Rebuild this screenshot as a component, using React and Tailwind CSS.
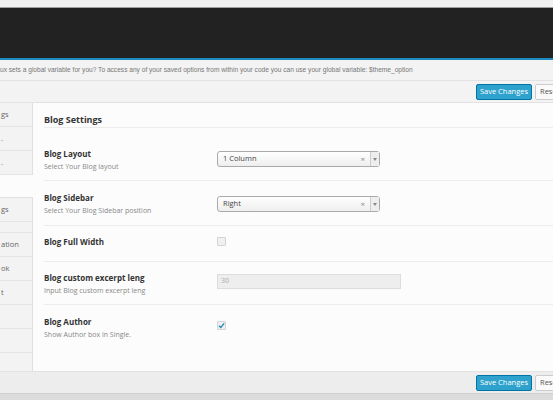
import React from "react";

const sidebarTop = [
  { label: "gs", h: 24 },
  { label: ".", h: 24 },
  { label: ".", h: 24 },
];
const sidebarBottom = [
  { label: "gs", h: 24 },
  { label: "", h: 11 },
  { label: "ation", h: 24 },
  { label: "ok", h: 24 },
  { label: "t", h: 24 },
  { label: "", h: 24 },
  { label: "", h: 24 },
];

function SideItem({ label, h }) {
  return (
    <div
      className="flex items-center whitespace-nowrap border-b border-[#e4e4e4] pl-[1px] text-[7.5px] text-[#666]"
      style={{ height: h }}
    >
      {label}
    </div>
  );
}

function Select({ value }) {
  return (
    <div className="flex h-[16px] w-[163px] items-center rounded-[3px] border border-[#aaaaaa] bg-gradient-to-b from-white to-[#eeeeee] text-[7.5px] text-[#444]">
      <span className="flex-1 pl-[5px]">{value}</span>
      <span className="pr-[5px] text-[8px] leading-none text-[#888]">×</span>
      <span className="flex h-full w-[9px] items-center justify-center border-l border-[#cccccc] bg-[#eeeeee]">
        <span className="block h-0 w-0 border-x-[2px] border-t-[3px] border-x-transparent border-t-[#888]" />
      </span>
    </div>
  );
}

function Row({ h, pt = 10, title, desc, children, ctlMt, last }) {
  return (
    <div
      className={`flex ${last ? "flex-1" : "border-b border-[#ececec]"}`}
      style={{ height: last ? undefined : h, paddingTop: pt }}
    >
      <div className="w-[173px] shrink-0">
        <div className="text-[8px] font-bold leading-[12px] text-[#333]">{title}</div>
        {desc && <div className="mt-[1px] text-[7px] leading-[12px] text-[#888]">{desc}</div>}
      </div>
      <div style={{ marginTop: ctlMt }}>{children}</div>
    </div>
  );
}

function Checkbox({ checked }) {
  return (
    <div className="flex h-[9px] w-[9px] items-center justify-center rounded-[1px] border border-[#d4d4d4] bg-[#f0f0f0]">
      {checked && (
        <svg width="7" height="7" viewBox="0 0 10 10">
          <path d="M1.5 5.2 L4 7.8 L8.8 2" fill="none" stroke="#1e8cbe" strokeWidth="2" />
        </svg>
      )}
    </div>
  );
}

function Buttons() {
  return (
    <div className="flex items-center justify-end gap-[3px]">
      <button className="h-[16px] w-[56px] shrink-0 rounded-[2px] border border-[#0074a2] bg-[#2ea2cc] text-[7.5px] text-white">
        Save Changes
      </button>
      <button className="h-[16px] w-[30px] shrink-0 rounded-[2px] border border-[#cccccc] bg-[#fafafa] pl-[4px] text-left text-[7.5px] text-[#555] -mr-[12px]">
        Reset
      </button>
    </div>
  );
}

export default function App() {
  return (
    <div
      className="flex h-[400px] w-[553px] flex-col overflow-hidden bg-[#f1f1f1]"
      style={{ fontFamily: '"Open Sans", "Liberation Sans", sans-serif' }}
    >
      <div className="h-[8px] shrink-0 border-b border-[#a0a0a0] bg-[#f1f1f1]" />
      <div className="h-[50px] shrink-0 bg-[#222222]" />
      <div className="h-[2px] shrink-0 bg-[#1e8cbe]" />
      <div
        className="flex h-[21px] shrink-0 items-center whitespace-nowrap border-b border-[#e2e2e2] bg-[#f3f3f3] text-[6.6px] text-[#777]"
        style={{ fontFamily: '"Liberation Sans", Arial, sans-serif' }}
      >
        ux sets a global variable for you? To access any of your saved options from within your code you can use your global variable: $theme_option
      </div>
      <div className="flex h-[22px] shrink-0 items-center justify-end overflow-visible border-b border-[#e2e2e2] bg-[#f3f3f3]">
        <Buttons />
      </div>
      <div className="flex min-h-0 flex-1">
        <div className="flex w-[33px] shrink-0 flex-col">
          <div className="border-r border-[#e0e0e0] bg-[#f3f3f3]">
            {sidebarTop.map((it, i) => (
              <SideItem key={i} {...it} />
            ))}
          </div>
          <div className="h-[22px] bg-[#fcfcfc]" />
          <div className="flex-1 border-r border-t border-[#e0e0e0] bg-[#f3f3f3]">
            {sidebarBottom.map((it, i) => (
              <SideItem key={i} {...it} />
            ))}
          </div>
        </div>
        <div className="flex flex-1 flex-col bg-[#fcfcfc] pl-[11px]">
          <div className="flex h-[25px] shrink-0 items-end border-b border-[#ececec] pb-[1px] text-[9px] font-bold text-[#333]">
            Blog Settings
          </div>
          <Row h={53} pt={20} title="Blog Layout" desc="Select Your Blog layout" ctlMt={3}>
            <Select value="1 Column" />
          </Row>
          <Row h={45} pt={11} title="Blog Sidebar" desc="Select Your Blog Sidebar position" ctlMt={4}>
            <Select value="Right" />
          </Row>
          <Row h={36} title="Blog Full Width" ctlMt={1}>
            <Checkbox />
          </Row>
          <Row h={43} title="Blog custom excerpt leng" desc="Input Blog custom excerpt leng" ctlMt={2}>
            <div className="flex h-[15px] w-[184px] items-center border border-[#dddddd] bg-[#eeeeee] pl-[3px] text-[7px] text-[#aaa]">
              30
            </div>
          </Row>
          <Row last pt={11} title="Blog Author" desc="Show Author box in Single." ctlMt={5}>
            <Checkbox checked />
          </Row>
        </div>
      </div>
      <div className="flex h-[22px] shrink-0 items-center justify-end border-t border-[#e2e2e2] bg-[#ededed]">
        <Buttons />
      </div>
      <div className="h-[7px] shrink-0 border-t border-[#cfcfcf] bg-[#dcdcdc]" />
    </div>
  );
}
